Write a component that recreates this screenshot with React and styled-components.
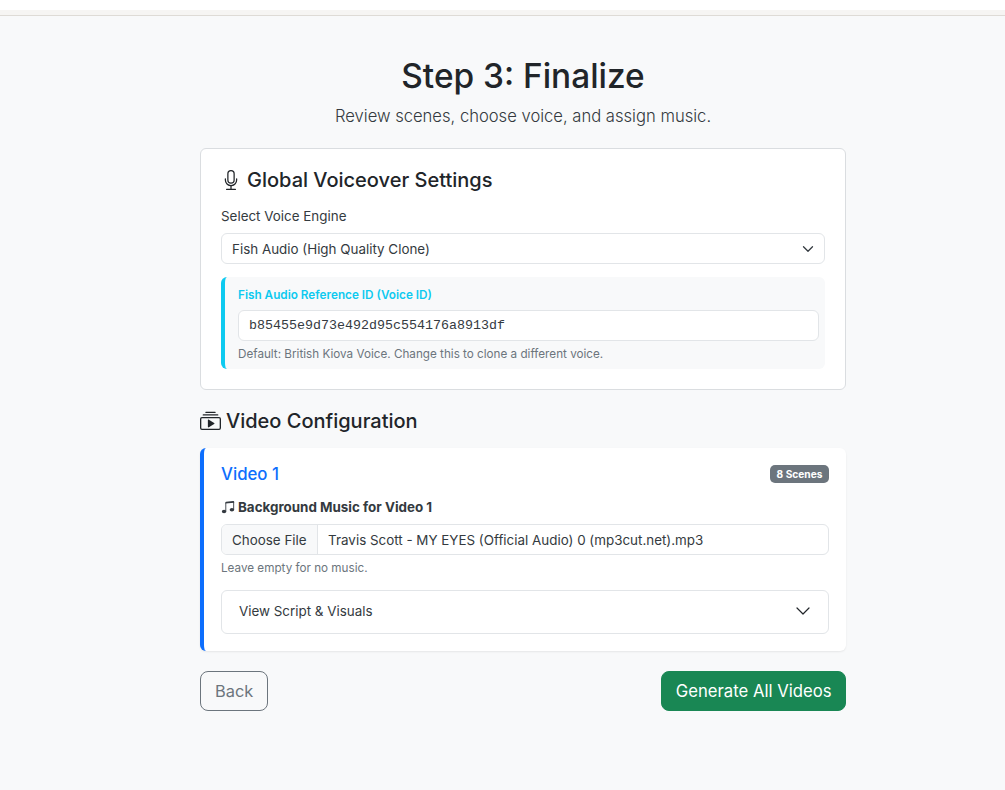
import React from 'react';
import styled, { createGlobalStyle } from 'styled-components';
import { BsMic, BsCollectionPlay, BsMusicNoteBeamed } from 'react-icons/bs';

const GlobalStyle = createGlobalStyle`
  * { box-sizing: border-box; }
  html, body { margin: 0; padding: 0; }
  body {
    background: #f8f9fa;
    font-family: Inter, "Liberation Sans", sans-serif;
    color: #343a40;
    font-size: 13.4px;
  }
`;

const TopBar = styled.div`
  height: 16px;
  background: #fff;
  display: flex;
  flex-direction: column;
  justify-content: flex-end;
  &::after {
    content: '';
    display: block;
    height: 5px;
    background: #f6f5f3;
    border-bottom: 1px solid #dedbd6;
  }
`;

const Page = styled.main`
  width: 646px;
  margin-left: 200px;
`;

const Header = styled.header`
  text-align: center;
  padding-top: 40px;
  margin-bottom: 22px;
`;

const Title = styled.h1`
  margin: 0;
  color: #212529;
  font-size: 33.4px;
  line-height: 40px;
  font-weight: 500;
`;

const Lead = styled.p`
  margin: 10px 0 0;
  font-size: 16.6px;
  line-height: 20px;
  font-weight: 300;
`;

const Card = styled.section`
  background: #fff;
  border: 1px solid #dadde0;
  border-radius: 6px;
  height: 242px;
  padding: 19px 20px 0;
`;

const CardTitle = styled.h2`
  margin: 0 0 14px;
  color: #212529;
  font-size: 20px;
  line-height: 24px;
  font-weight: 500;
  display: flex;
  align-items: center;
  gap: 6px;
`;

const Label = styled.label`
  display: block;
  line-height: 21px;
  margin-bottom: 6px;
`;

const SelectBox = styled.div`
  height: 31px;
  border: 1px solid #e2e5e8;
  border-radius: 6px;
  padding: 0 10px;
  display: flex;
  align-items: center;
  justify-content: space-between;
  background: #fff;
`;

const FishPanel = styled.div`
  margin-top: 13px;
  height: 92px;
  background: #f8f9fa;
  border-left: 4px solid #0dcaf0;
  border-radius: 6px;
  padding: 11px 6px 0 13px;
`;

const FishLabel = styled.div`
  color: #0dcaf0;
  font-size: 11.75px;
  line-height: 15px;
  font-weight: 600;
  margin-bottom: 7px;
`;

const MonoInput = styled.div`
  height: 31px;
  border: 1px solid #e2e5e8;
  border-radius: 6px;
  background: #fff;
  padding: 0 10px;
  display: flex;
  align-items: center;
  font-family: "Liberation Mono", monospace;
  font-size: 13.33px;
`;

const Hint = styled.div`
  color: #6c757d;
  font-size: 11.7px;
  line-height: 15px;
  margin-top: 6px;
`;

const SectionTitle = styled.h2`
  margin: 18px 0 14px;
  color: #212529;
  font-size: 20px;
  line-height: 26px;
  font-weight: 500;
  display: flex;
  align-items: center;
  gap: 5px;
`;

const VideoCard = styled.section`
  background: #fff;
  border-left: 4px solid #0d6efd;
  border-radius: 6px;
  height: 203px;
  padding: 16px 17px 0;
  box-shadow: 0 1px 2px rgba(0, 0, 0, 0.075);
`;

const VideoHead = styled.div`
  display: flex;
  justify-content: space-between;
  align-items: center;
  height: 20px;
`;

const VideoName = styled.h3`
  margin: 0;
  color: #0d6efd;
  font-size: 16.8px;
  line-height: 20px;
  font-weight: 500;
`;

const Badge = styled.span`
  background: #6c757d;
  color: #fff;
  border-radius: 5px;
  font-size: 10.2px;
  line-height: 18px;
  height: 18px;
  padding: 0 6.5px;
  font-weight: 700;
`;

const MusicLabel = styled.div`
  display: flex;
  align-items: center;
  gap: 3px;
  margin-top: 13px;
  line-height: 20px;
  font-weight: 700;
`;

const FileBox = styled.div`
  margin-top: 7px;
  height: 31px;
  border: 1px solid #e2e5e8;
  border-radius: 6px;
  display: flex;
  overflow: hidden;
`;

const FileButton = styled.div`
  background: #f8f9fa;
  border-right: 1px solid #e2e5e8;
  padding: 0 10px;
  display: flex;
  align-items: center;
`;

const FileName = styled.div`
  padding: 0 10.5px;
  display: flex;
  align-items: center;
`;

const Accordion = styled.div`
  margin-top: 14px;
  height: 44px;
  border: 1px solid #e2e5e8;
  border-radius: 6px;
  padding: 0 17px 2px;
  display: flex;
  align-items: center;
  justify-content: space-between;
`;

const Actions = styled.div`
  display: flex;
  justify-content: space-between;
  margin-top: 20px;
`;

const Button = styled.button`
  height: 40px;
  border-radius: 8px;
  font-family: inherit;
  font-size: ${p => (p.$primary ? '16.7px' : '16.4px')};
  padding: 0 ${p => (p.$primary ? '13.5px' : '14px')};
  background: ${p => (p.$primary ? '#198754' : 'transparent')};
  color: ${p => (p.$primary ? '#fff' : '#6c757d')};
  border: 1px solid ${p => (p.$primary ? '#198754' : '#6c757d')};
`;

const Chevron = ({ size, stroke, weight }) => (
  <svg width={size} height={size} viewBox="0 0 16 16" fill="none">
    <path d="M2 5l6 6 6-6" stroke={stroke} strokeWidth={weight} strokeLinecap="round" strokeLinejoin="round" />
  </svg>
);

const App = () => (
  <>
    <GlobalStyle />
    <TopBar />
    <Page>
      <Header>
        <Title>Step 3: Finalize</Title>
        <Lead>Review scenes, choose voice, and assign music.</Lead>
      </Header>
      <Card>
        <CardTitle><BsMic size={20} />Global Voiceover Settings</CardTitle>
        <Label>Select Voice Engine</Label>
        <SelectBox>
          Fish Audio (High Quality Clone)
          <Chevron size={12} stroke="#343a40" weight="1.7" />
        </SelectBox>
        <FishPanel>
          <FishLabel>Fish Audio Reference ID (Voice ID)</FishLabel>
          <MonoInput>b85455e9d73e492d95c554176a8913df</MonoInput>
          <Hint>Default: British Kiova Voice. Change this to clone a different voice.</Hint>
        </FishPanel>
      </Card>
      <SectionTitle><BsCollectionPlay size={21} />Video Configuration</SectionTitle>
      <VideoCard>
        <VideoHead>
          <VideoName>Video 1</VideoName>
          <Badge>8 Scenes</Badge>
        </VideoHead>
        <MusicLabel><BsMusicNoteBeamed size={14} />Background Music for Video 1</MusicLabel>
        <FileBox>
          <FileButton>Choose File</FileButton>
          <FileName>Travis Scott - MY EYES (Official Audio) 0 (mp3cut.net).mp3</FileName>
        </FileBox>
        <Hint>Leave empty for no music.</Hint>
        <Accordion>
          View Script &amp; Visuals
          <Chevron size={16} stroke="#212529" weight="1.2" />
        </Accordion>
      </VideoCard>
      <Actions>
        <Button>Back</Button>
        <Button $primary>Generate All Videos</Button>
      </Actions>
    </Page>
  </>
);

export default App;
